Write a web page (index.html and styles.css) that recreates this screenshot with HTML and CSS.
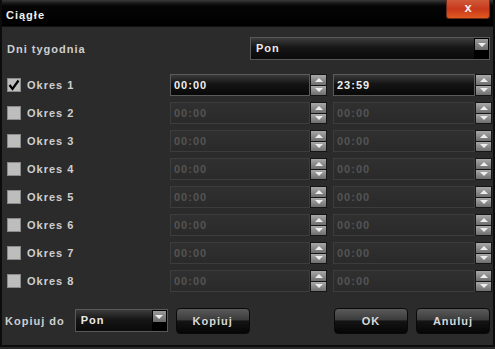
FILE: index.html
```html
<!DOCTYPE html>
<html>
<head>
<meta charset="utf-8">
<link rel="stylesheet" href="styles.css">
</head>
<body>
<div class="window">
  <div class="titlebar">
    <span class="title">Ciągłe</span>
    <div class="close">x</div>
  </div>
  <div class="content">
    <div class="dni-row">
      <span class="label">Dni tygodnia</span>
      <div class="select wide">
        <span class="select-text">Pon</span>
        <div class="select-arrow"><div class="arrow-btn"><span class="tri-down"></span></div></div>
      </div>
    </div>
    <div class="periods">
      <div class="period">
        <span class="check checked"><svg width="12" height="12" viewBox="0 0 12 12"><path d="M1.5 6 L4.5 10 L10.5 1.5" fill="none" stroke="#000" stroke-width="2.2"/></svg></span>
        <span class="label plabel">Okres 1</span>
        <div class="time t1 active"><span class="time-text">00:00</span></div>
        <div class="spin"><div class="spin-btn"><span class="tri-up"></span></div><div class="spin-btn"><span class="tri-down"></span></div></div>
        <div class="time t2 active"><span class="time-text">23:59</span></div>
        <div class="spin"><div class="spin-btn"><span class="tri-up"></span></div><div class="spin-btn"><span class="tri-down"></span></div></div>
      </div>
      <div class="period">
        <span class="check"></span>
        <span class="label plabel">Okres 2</span>
        <div class="time t1"><span class="time-text">00:00</span></div>
        <div class="spin"><div class="spin-btn"><span class="tri-up"></span></div><div class="spin-btn"><span class="tri-down"></span></div></div>
        <div class="time t2"><span class="time-text">00:00</span></div>
        <div class="spin"><div class="spin-btn"><span class="tri-up"></span></div><div class="spin-btn"><span class="tri-down"></span></div></div>
      </div>
      <div class="period">
        <span class="check"></span>
        <span class="label plabel">Okres 3</span>
        <div class="time t1"><span class="time-text">00:00</span></div>
        <div class="spin"><div class="spin-btn"><span class="tri-up"></span></div><div class="spin-btn"><span class="tri-down"></span></div></div>
        <div class="time t2"><span class="time-text">00:00</span></div>
        <div class="spin"><div class="spin-btn"><span class="tri-up"></span></div><div class="spin-btn"><span class="tri-down"></span></div></div>
      </div>
      <div class="period">
        <span class="check"></span>
        <span class="label plabel">Okres 4</span>
        <div class="time t1"><span class="time-text">00:00</span></div>
        <div class="spin"><div class="spin-btn"><span class="tri-up"></span></div><div class="spin-btn"><span class="tri-down"></span></div></div>
        <div class="time t2"><span class="time-text">00:00</span></div>
        <div class="spin"><div class="spin-btn"><span class="tri-up"></span></div><div class="spin-btn"><span class="tri-down"></span></div></div>
      </div>
      <div class="period">
        <span class="check"></span>
        <span class="label plabel">Okres 5</span>
        <div class="time t1"><span class="time-text">00:00</span></div>
        <div class="spin"><div class="spin-btn"><span class="tri-up"></span></div><div class="spin-btn"><span class="tri-down"></span></div></div>
        <div class="time t2"><span class="time-text">00:00</span></div>
        <div class="spin"><div class="spin-btn"><span class="tri-up"></span></div><div class="spin-btn"><span class="tri-down"></span></div></div>
      </div>
      <div class="period">
        <span class="check"></span>
        <span class="label plabel">Okres 6</span>
        <div class="time t1"><span class="time-text">00:00</span></div>
        <div class="spin"><div class="spin-btn"><span class="tri-up"></span></div><div class="spin-btn"><span class="tri-down"></span></div></div>
        <div class="time t2"><span class="time-text">00:00</span></div>
        <div class="spin"><div class="spin-btn"><span class="tri-up"></span></div><div class="spin-btn"><span class="tri-down"></span></div></div>
      </div>
      <div class="period">
        <span class="check"></span>
        <span class="label plabel">Okres 7</span>
        <div class="time t1"><span class="time-text">00:00</span></div>
        <div class="spin"><div class="spin-btn"><span class="tri-up"></span></div><div class="spin-btn"><span class="tri-down"></span></div></div>
        <div class="time t2"><span class="time-text">00:00</span></div>
        <div class="spin"><div class="spin-btn"><span class="tri-up"></span></div><div class="spin-btn"><span class="tri-down"></span></div></div>
      </div>
      <div class="period">
        <span class="check"></span>
        <span class="label plabel">Okres 8</span>
        <div class="time t1"><span class="time-text">00:00</span></div>
        <div class="spin"><div class="spin-btn"><span class="tri-up"></span></div><div class="spin-btn"><span class="tri-down"></span></div></div>
        <div class="time t2"><span class="time-text">00:00</span></div>
        <div class="spin"><div class="spin-btn"><span class="tri-up"></span></div><div class="spin-btn"><span class="tri-down"></span></div></div>
      </div>
    </div>
    <div class="footer">
      <span class="label klabel">Kopiuj do</span>
      <div class="select small">
        <span class="select-text">Pon</span>
        <div class="select-arrow"><div class="arrow-btn"><span class="tri-down"></span></div></div>
      </div>
      <button class="btn kopiuj">Kopiuj</button>
      <div class="spacer"></div>
      <button class="btn">OK</button>
      <button class="btn">Anuluj</button>
    </div>
  </div>
</div>
</body>
</html>
```
FILE: styles.css
```css
* { box-sizing: border-box; }
html, body { margin: 0; padding: 0; background: #2a2a2a; }
body { width: 495px; height: 349px; overflow: hidden; font-family: "Liberation Sans", Arial, sans-serif; font-weight: bold; font-size: 11px; letter-spacing: 1px; }
.window { width: 495px; height: 347px; background: #2b2b2b; border-left: 2px solid #0c0c0c; border-right: 2px solid #0c0c0c; border-bottom: 2px solid #0c0c0c; display: flex; flex-direction: column; }
.titlebar { height: 27px; background: linear-gradient(#3a3a3a 0, #1a1a1a 3px, #050505 6px, #000 100%); display: flex; align-items: flex-start; justify-content: space-between; border-bottom: 1px solid #111; }
.title { color: #f0f0f0; padding: 8px 0 0 4px; line-height: 14px; font-size: 11px; }
.close { width: 44px; height: 19px; margin-right: 3px; background: linear-gradient(#d05a3a, #c8381c 50%, #e05a20); border: 1px solid #6a2a1a; border-top: none; border-radius: 0 0 3px 3px; color: #f4f0ee; text-align: center; font-size: 13px; line-height: 16px; letter-spacing: 0; }
.content { padding: 10px 0 0 5px; display: flex; flex-direction: column; }
.label { color: #cfcfcf; }
.dni-row { display: flex; align-items: center; justify-content: space-between; height: 23px; padding-right: 3px; }
.select { display: flex; height: 23px; background: linear-gradient(#3c3c3c, #161616 45%, #0a0a0a); border: 1px solid #595959; flex-shrink: 0; }
.select.wide { width: 240px; }
.select.small { width: 93px; }
.select-text { flex: 1; color: #eaeaea; padding-left: 5px; line-height: 21px; }
.select-arrow { width: 15px; background: #000; padding: 1px 0 0 1px; }
.arrow-btn { width: 13px; height: 11px; background: linear-gradient(#9a9a9a, #6a6a6a); display: flex; align-items: center; justify-content: center; }
.periods { margin-top: 11px; display: flex; flex-direction: column; }
.period { height: 28px; display: flex; align-items: center; }
.period > * { flex-shrink: 0; }
.check { width: 14px; height: 14px; background: #bdbdbd; border: 1px solid #8a8a8a; display: flex; align-items: center; justify-content: center; }
.plabel { width: 143px; margin-left: 6px; }
.time { height: 22px; background: linear-gradient(#303030, #2a2a2a); border: 1px solid #3c3c3c; padding-left: 3px; }
.t1 { width: 140px; }
.t2 { width: 142px; }
.time.active { background: linear-gradient(#3a3a3a, #141414 45%, #080808); border: 1px solid #5a5a5a; }
.time-text { line-height: 20px; color: #545454; }
.time.active .time-text { color: #eeeeee; }
.spin { width: 17px; height: 22px; background: #151515; padding: 1px; display: flex; flex-direction: column; gap: 1px; margin-right: 6px; }
.spin:last-child { margin-right: 0; }
.spin-btn { flex: 1; background: linear-gradient(#a8a8a8, #6e6e6e); display: flex; align-items: center; justify-content: center; }
.tri-up { width: 0; height: 0; border-left: 4px solid transparent; border-right: 4px solid transparent; border-bottom: 4px solid #eeeeee; }
.tri-down { width: 0; height: 0; border-left: 4px solid transparent; border-right: 4px solid transparent; border-top: 4px solid #eeeeee; }
.footer { margin-top: 12px; display: flex; align-items: center; height: 27px; padding-right: 3px; }
.footer > * { flex-shrink: 0; }
.klabel { margin-right: 10px; margin-left: -2px; }
.btn { width: 74px; height: 26px; border: 1px solid #0a0a0a; border-radius: 4px; background: linear-gradient(#5a5a5a, #3c3c3c 45%, #141414 50%, #050505); color: #d8d8d8; font-family: inherit; font-weight: bold; font-size: 11px; letter-spacing: 1px; padding: 0; }
.kopiuj { margin-left: 8px; }
.footer .spacer { flex: 1; flex-shrink: 1; }
.btn + .btn { margin-left: 8px; }
```
